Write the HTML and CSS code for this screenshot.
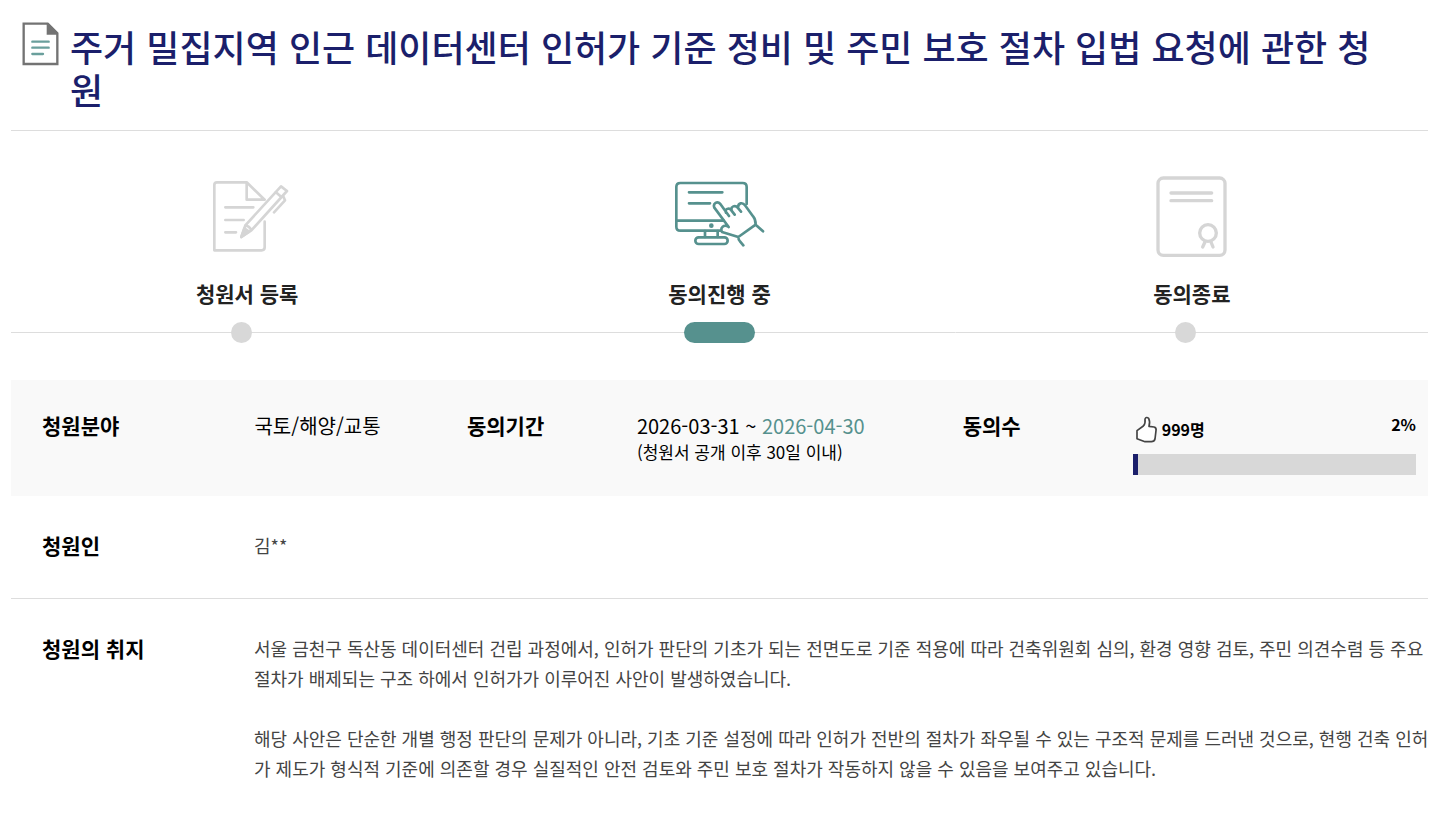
FILE: index.html
```html
<!DOCTYPE html>
<html lang="ko">
<head>
    <meta charset="UTF-8">
    <meta name="viewport" content="width=device-width, initial-scale=1.0">
    <title>국민동의청원</title>
    <link rel="stylesheet" href="styles.css">
</head>
<body>
<main class="petition">
    <header class="title-area">
        <svg class="title-icon" viewBox="66 66 111 132" aria-hidden="true">
            <path d="M71 71H143L172 100V192H71Z" fill="#fff" stroke="#737373" stroke-width="7"/>
            <path d="M140 70H146L174 98V104H140Z" fill="#737373"/>
            <path d="M97 125H146M97 143H146M97 162H129" fill="none" stroke="#6a9f9c" stroke-width="7" stroke-linecap="round"/>
        </svg>
        <h1>주거 밀집지역 인근 데이터센터 인허가 기준 정비 및 주민 보호 절차 입법 요청에 관한 청원</h1>
    </header>

    <ol class="steps">
        <li class="step">
            <svg class="step-icon" viewBox="51 30 300 270" aria-hidden="true">
                <path d="M254 185V262Q254 271 245 271H103V75Q103 67 111 67H200L254 119H200V67"/>
                <path d="M136 142H220M136 180H191M136 217H168"/>
                <path d="M184 231L196 196L303 79L321 93L214 211ZM196 196Q208 198 214 211M287 96L304 111M309 107L315 121L282 157"/>
                <path class="fill" d="M184 231L193 205L207 215Z"/>
            </svg>
            <span class="step-name">청원서 등록</span>
            <span class="step-track"><i class="dot"></i></span>
        </li>
        <li class="step on">
            <svg class="step-icon" viewBox="57 30 300 270" aria-hidden="true">
                <path d="M290 132V81Q290 69 278 69H91Q79 69 79 81V200Q79 212 91 212H212M80 182H221"/>
                <path d="M117 97H217M117 130H180M165 213V231M203 213V231"/>
                <rect x="136" y="232" width="97" height="20" rx="10"/>
                <circle class="fill" cx="184" cy="197" r="3"/>
                <path d="M236 201L193 143C188 130 202 122 211 132L237 168M228 158C223 147 238 141 244 151L254 164M245 151C241 139 256 134 263 143L273 155M264 143C264 128 278 126 285 136L310 170Q317 178 317 194L339 214M317 194L265 231L216 216Q211 206 218 200Q225 194 236 201M265 231Q265 239 270 244L280 256"/>
            </svg>
            <span class="step-name">동의진행 중</span>
            <span class="step-track"><i class="dot"></i></span>
        </li>
        <li class="step">
            <svg class="step-icon" viewBox="36 30 300 270" aria-hidden="true">
                <g stroke-width="10">
                    <rect x="84" y="54" width="201" height="232" rx="16"/>
                    <path d="M123 99H245M123 122H245M225 246L218 261M243 246L249 261"/>
                    <circle cx="234" cy="219" r="25"/>
                </g>
            </svg>
            <span class="step-name">동의종료</span>
            <span class="step-track"><i class="dot"></i></span>
        </li>
    </ol>

    <dl class="summary">
        <dt>청원분야</dt>
        <dd>국토/해양/교통</dd>
        <dt>동의기간</dt>
        <dd>2026-03-31 ~ <span class="end-date">2026-04-30</span><small>(청원서 공개 이후 30일 이내)</small></dd>
        <dt>동의수</dt>
        <dd class="agree">
            <div class="agree-head">
                <span class="count">
                    <svg class="thumb" viewBox="583 137 69 81" aria-hidden="true">
                        <path d="M589 181L608 167Q615 160 613 146Q617 138 624 144Q629 154 625 168L640 170Q648 172 646 181L643 206Q641 214 632 214H613L589 205Z"/>
                    </svg>
                    999명
                </span>
                <span class="percent">2%</span>
            </div>
            <div class="bar"><div class="bar-fill" style="width: 2%"></div></div>
        </dd>
    </dl>

    <dl class="detail">
        <dt>청원인</dt>
        <dd>김**</dd>
    </dl>
    <dl class="detail">
        <dt>청원의 취지</dt>
        <dd>
            <p>서울 금천구 독산동 데이터센터 건립 과정에서, 인허가 판단의 기초가 되는 전면도로 기준 적용에 따라 건축위원회 심의, 환경 영향 검토, 주민 의견수렴 등 주요 절차가 배제되는 구조 하에서 인허가가 이루어진 사안이 발생하였습니다.</p>
            <p>해당 사안은 단순한 개별 행정 판단의 문제가 아니라, 기초 기준 설정에 따라 인허가 전반의 절차가 좌우될 수 있는 구조적 문제를 드러낸 것으로, 현행 건축 인허가 제도가 형식적 기준에 의존할 경우 실질적인 안전 검토와 주민 보호 절차가 작동하지 않을 수 있음을 보여주고 있습니다.</p>
        </dd>
    </dl>
</main>
</body>
</html>
```

FILE: styles.css
```css
* {
    box-sizing: border-box;
}
body {
    margin: 0;
    background: #fff;
    color: #000;
    font-family: "Noto Sans CJK KR", sans-serif;
    font-size: 18px;
}
h1, dl, dd, ol, p {
    margin: 0;
    padding: 0;
}
.petition {
    margin: 0 12px 0 11px;
}

.title-area {
    display: flex;
    align-items: flex-start;
    gap: 11px;
    padding: 22px 34px 19px 11px;
    border-bottom: 1px solid #ddd;
}
.title-icon {
    flex: none;
    width: 37px;
    height: 44px;
}
h1 {
    padding-top: 3px;
    color: #1b1f6b;
    font-size: 36px;
    font-weight: 500;
    line-height: 43px;
}

.steps {
    display: flex;
    padding: 39px 0 37px;
    list-style: none;
}
.step {
    display: flex;
    flex: 1;
    flex-direction: column;
    align-items: center;
}
.step-icon {
    width: 100px;
    height: 90px;
    fill: none;
    stroke: #d5d5d5;
    stroke-width: 8;
    stroke-linecap: round;
    stroke-linejoin: round;
}
.step-icon .fill {
    fill: #d5d5d5;
}
.on .step-icon {
    stroke: #56918e;
}
.on .step-icon .fill {
    fill: #56918e;
}
.step-name {
    margin: 18px 0 14px;
    color: #222;
    font-size: 21px;
    font-weight: 700;
    line-height: 30px;
}
.step-track {
    display: flex;
    justify-content: center;
    width: 100%;
    padding-right: 12px;
    background: linear-gradient(#ddd, #ddd) center / 100% 1px no-repeat;
}
.on .step-track {
    padding-right: 0;
}
.dot {
    width: 21px;
    height: 21px;
    border-radius: 11px;
    background: #d8d8d8;
}
.on .dot {
    width: 71px;
    background: #56918e;
}

dt {
    font-size: 21px;
    font-weight: 700;
    line-height: 30px;
}
.summary {
    display: grid;
    grid-template-columns: 15fr 15fr 12fr 23fr 12fr 20fr;
    padding: 30px 12px 21px 31px;
    background: #f9f9f9;
}
.summary dd {
    font-size: 20px;
    line-height: 32px;
}
.end-date {
    color: #56918e;
}
.summary small {
    display: block;
    font-size: 17px;
    line-height: 20px;
}
.agree-head {
    display: flex;
    justify-content: space-between;
    height: 44px;
    font-size: 16px;
    font-weight: 700;
}
.count {
    display: flex;
    align-items: center;
    gap: 4px;
    height: 38px;
    padding-left: 2px;
}
.thumb {
    width: 23px;
    height: 27px;
    fill: #fff;
    stroke: #444;
    stroke-width: 5;
    stroke-linejoin: round;
}
.percent {
    line-height: 28px;
}
.bar {
    height: 21px;
    background: #d8d8d8;
}
.bar-fill {
    height: 100%;
    background: #1b1f6b;
}

.detail {
    display: grid;
    grid-template-columns: 212px 1fr;
    padding: 34px 0 38px 31px;
}
.detail + .detail {
    border-top: 1px solid #ddd;
}
.detail dd {
    margin-right: -3px;
    color: #444;
    line-height: 30px;
}
.detail p + p {
    margin-top: 30px;
}
```
